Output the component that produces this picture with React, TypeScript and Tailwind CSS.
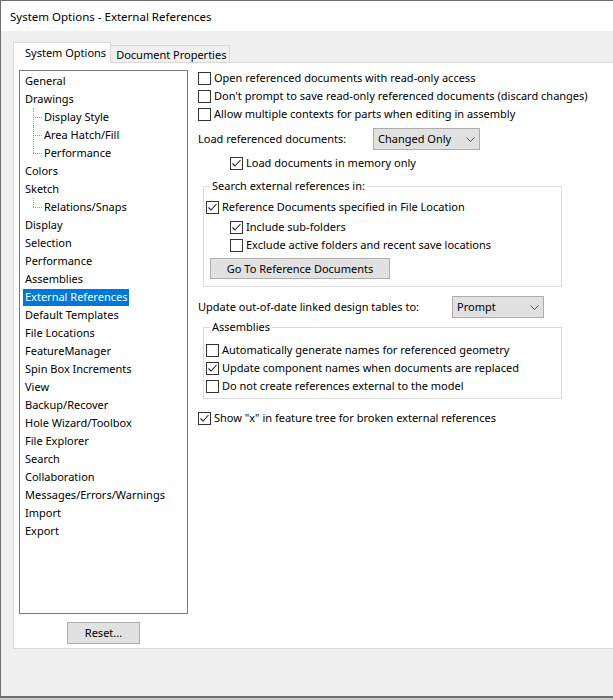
import React from 'react'

const NAV: { label: string; child?: boolean; last?: boolean }[] = [
  { label: 'General' },
  { label: 'Drawings' },
  { label: 'Display Style', child: true },
  { label: 'Area Hatch/Fill', child: true },
  { label: 'Performance', child: true, last: true },
  { label: 'Colors' },
  { label: 'Sketch' },
  { label: 'Relations/Snaps', child: true, last: true },
  { label: 'Display' },
  { label: 'Selection' },
  { label: 'Performance' },
  { label: 'Assemblies' },
  { label: 'External References' },
  { label: 'Default Templates' },
  { label: 'File Locations' },
  { label: 'FeatureManager' },
  { label: 'Spin Box Increments' },
  { label: 'View' },
  { label: 'Backup/Recover' },
  { label: 'Hole Wizard/Toolbox' },
  { label: 'File Explorer' },
  { label: 'Search' },
  { label: 'Collaboration' },
  { label: 'Messages/Errors/Warnings' },
  { label: 'Import' },
  { label: 'Export' },
]

function Box({ checked }: { checked?: boolean }) {
  return (
    <span className="flex-shrink-0 w-[13px] h-[13px] border border-[#333] bg-white flex items-center justify-center">
      {checked && (
        <svg width="11" height="11" viewBox="0 0 11 11">
          <path d="M1.5 5.5 L4 8 L9.5 2" fill="none" stroke="#222" strokeWidth="1.1" />
        </svg>
      )}
    </span>
  )
}

function Check({ label, checked, className = '' }: { label: string; checked?: boolean; className?: string }) {
  return (
    <div className={`flex items-center gap-[3px] h-[18px] ${className}`}>
      <Box checked={checked} />
      <span className="whitespace-nowrap">{label}</span>
    </div>
  )
}

function Combo({ value, width }: { value: string; width: string }) {
  return (
    <div className={`${width} h-[22px] bg-[#e1e1e1] border border-[#adadad] flex items-center justify-between pl-[4px] pr-[4px]`}>
      <span>{value}</span>
      <svg width="9" height="5" viewBox="0 0 9 5">
        <path d="M0.5 0.5 L4.5 4.5 L8.5 0.5" fill="none" stroke="#555" strokeWidth="1" />
      </svg>
    </div>
  )
}

export default function App() {
  return (
    <div className="w-[613px] h-[700px] overflow-hidden bg-[#c9c9c9] text-[11px] leading-[16px] text-black font-['Noto_Sans',sans-serif]">
      <div className="h-[698px] flex flex-col border-l border-t border-b-2 border-[#6e6e6e] bg-[#f0f0f0]">
        {/* title bar */}
        <div className="h-[30px] bg-white flex items-center pl-[9px] pt-[1px] text-[11.5px]">System Options - External References</div>

        <div className="flex-1 pl-[12px] pt-[11px] overflow-hidden">
          {/* tabs */}
          <div className="flex items-end h-[21px] -mb-px relative z-10">
            <div className="h-[21px] bg-white border border-b-0 border-[#d9d9d9] pl-[11px] pr-[4px] pt-[2px]">System Options</div>
            <div className="h-[17px] mb-px bg-[#f0f0f0] border border-b-0 border-l-0 border-[#d9d9d9] pl-[5px] pr-[3px] pt-[1px]">Document Properties</div>
          </div>

          {/* tab panel */}
          <div className="w-[640px] h-[587px] bg-white border border-[#d9d9d9] flex items-start">
            <div className="pl-[5px] pt-[7px] flex flex-col items-center">
              <div className="w-[169px] h-[544px] border border-[#7a7a7a] pt-[1px]">
                {NAV.map((n, i) => (
                  <div key={i} className="h-[18px] flex items-center">
                    {n.child ? (
                      <>
                        <div className="w-[13px]" />
                        <div className="relative w-[9px] h-full">
                          <div className={`absolute left-0 top-0 border-l border-dotted border-[#9a9a9a] ${n.last ? 'h-1/2' : 'h-full'}`} />
                          <div className="absolute left-0 top-1/2 w-full border-t border-dotted border-[#9a9a9a]" />
                        </div>
                        <span className="ml-[2px]">{n.label}</span>
                      </>
                    ) : n.label === 'External References' ? (
                      <span className="ml-[3px] px-[2px] h-[17px] flex items-center bg-[#0078d7] text-white">{n.label}</span>
                    ) : (
                      <span className="ml-[5px]">{n.label}</span>
                    )}
                  </div>
                ))}
              </div>
              <button className="block mt-[8px] w-[73px] h-[22px] bg-[#e1e1e1] border border-[#adadad]">Reset...</button>
            </div>

            {/* options */}
            <div className="ml-[10px] pt-[6px] flex flex-col">
              <Check label="Open referenced documents with read-only access" />
              <Check label="Don't prompt to save read-only referenced documents (discard changes)" />
              <Check label="Allow multiple contexts for parts when editing in assembly" />

              <div className="mt-[5px] flex items-center h-[22px]">
                <span className="w-[175px]">Load referenced documents:</span>
                <Combo value="Changed Only" width="w-[107px]" />
              </div>

              <Check label="Load documents in memory only" checked className="mt-[4px] ml-[32px]" />

              <fieldset className="mt-[6px] ml-[5px] w-[359px] border border-[#dcdcdc]">
                <legend className="ml-[6px] px-[2px]">Search external references in:</legend>
                <div className="pl-[2px] pt-[4px] pb-[7px]">
                  <Check label="Reference Documents specified in File Location" checked className="h-[17px]" />
                  <Check label="Include sub-folders" checked className="h-[17px] mt-[2px] ml-[24px]" />
                  <Check label="Exclude active folders and recent save locations" className="h-[17px] ml-[24px]" />
                  <button className="block mt-[4px] ml-[4px] w-[180px] h-[21px] bg-[#e1e1e1] border border-[#adadad]">Go To Reference Documents</button>
                </div>
              </fieldset>

              <div className="mt-[9px] flex items-center h-[22px]">
                <span className="w-[254px]">Update out-of-date linked design tables to:</span>
                <Combo value="Prompt" width="w-[92px]" />
              </div>

              <fieldset className="mt-[1px] ml-[5px] w-[359px] border border-[#dcdcdc]">
                <legend className="ml-[6px] px-[2px]">Assemblies</legend>
                <div className="pl-[2px] pt-[6px] pb-[3px]">
                  <Check label="Automatically generate names for referenced geometry" />
                  <Check label="Update component names when documents are replaced" checked />
                  <Check label="Do not create references external to the model" />
                </div>
              </fieldset>

              <Check label={'Show "x" in feature tree for broken external references'} checked className="mt-[10px]" />
            </div>
          </div>
        </div>
      </div>
    </div>
  )
}
